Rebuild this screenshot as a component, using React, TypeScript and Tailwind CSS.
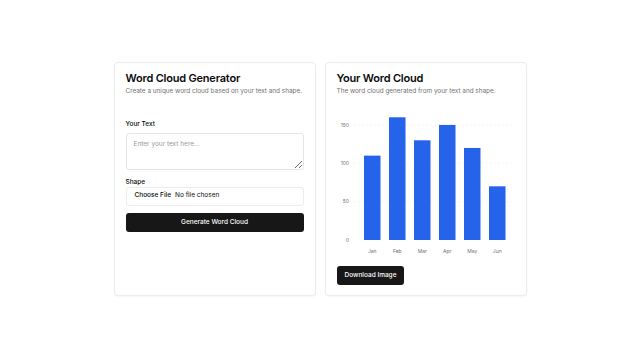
import React from "react";

const data = [
  { month: "Jan", value: 110 },
  { month: "Feb", value: 160 },
  { month: "Mar", value: 130 },
  { month: "Apr", value: 150 },
  { month: "May", value: 120 },
  { month: "Jun", value: 70 },
];

// chart geometry, in svg coords
const baseY = 125;
const perUnit = 0.767;
const ticks = [0, 50, 100, 150];

function BarChart() {
  return (
    <svg width="180" height="144" viewBox="0 0 180 144" className="block">
      {ticks.map((t) => {
        const y = baseY - t * perUnit;
        return (
          <g key={t}>
            {t > 0 && (
              <line x1="17" x2="177" y1={y} y2={y} stroke="#eeeeee" strokeWidth="0.6" strokeDasharray="2 2" />
            )}
            <text x="12" y={y + 1.8} textAnchor="end" fontSize="5" fill="#6b7280">
              {t}
            </text>
          </g>
        );
      })}
      {data.map((d, i) => {
        const x = 27 + i * 25;
        const h = d.value * perUnit;
        return (
          <g key={d.month}>
            <rect x={x} y={baseY - h} width="16.5" height={h} fill="#2563eb" />
            <text x={x + 8.25} y={baseY + 13} textAnchor="middle" fontSize="5" fill="#6b7280">
              {d.month}
            </text>
          </g>
        );
      })}
    </svg>
  );
}

export default function App() {
  return (
    <div className="min-h-[357px] w-full bg-white flex items-center justify-center font-['Inter',sans-serif] text-[#0a0a0a]">
      <div className="flex gap-[9px]">
        {/* Generator form */}
        <div className="w-[202px] h-[234px] rounded-[4px] border border-[#ececec] bg-white shadow-[0_1px_2px_rgba(0,0,0,0.04)] px-[11px] pt-[7px]">
          <h2 className="text-[11px] leading-[16px] font-semibold tracking-[-0.2px]">Word Cloud Generator</h2>
          <p className="text-[6.4px] leading-[10px] text-[#737373] whitespace-nowrap">Create a unique word cloud based on your text and shape.</p>

          <label className="block mt-[24px] text-[6.5px] leading-[8px] font-medium">Your Text</label>
          <textarea
            placeholder="Enter your text here..."
            className="mt-[5px] block w-full h-[37px] rounded-[3px] border border-[#e5e5e5] px-[7px] py-[5px] text-[6.5px] leading-[10px] placeholder:text-[#9a9a9a] outline-none"
          />

          <label className="block mt-[8px] text-[6.5px] leading-[8px] font-medium">Shape</label>
          <div className="mt-[1px] flex items-center h-[19px] w-full rounded-[3px] border border-[#ececec] px-[8px] text-[6.5px]">
            <span className="font-medium">Choose File</span>
            <span className="ml-[4px]">No file chosen</span>
          </div>

          <button className="mt-[7px] w-full h-[19px] rounded-[3px] bg-[#171717] text-white text-[6.5px] font-medium">
            Generate Word Cloud
          </button>
        </div>

        {/* Result */}
        <div className="w-[202px] h-[234px] rounded-[4px] border border-[#ececec] bg-white shadow-[0_1px_2px_rgba(0,0,0,0.04)] px-[11px] pt-[7px]">
          <h2 className="text-[11px] leading-[16px] font-semibold tracking-[-0.2px]">Your Word Cloud</h2>
          <p className="text-[6.4px] leading-[10px] text-[#737373] whitespace-nowrap">The word cloud generated from your text and shape.</p>

          <div className="mt-[19px]">
            <BarChart />
          </div>

          <button className="mt-[4px] h-[19px] px-[8px] rounded-[3px] bg-[#171717] text-white text-[6.5px] font-medium">
            Download Image
          </button>
        </div>
      </div>
    </div>
  );
}
